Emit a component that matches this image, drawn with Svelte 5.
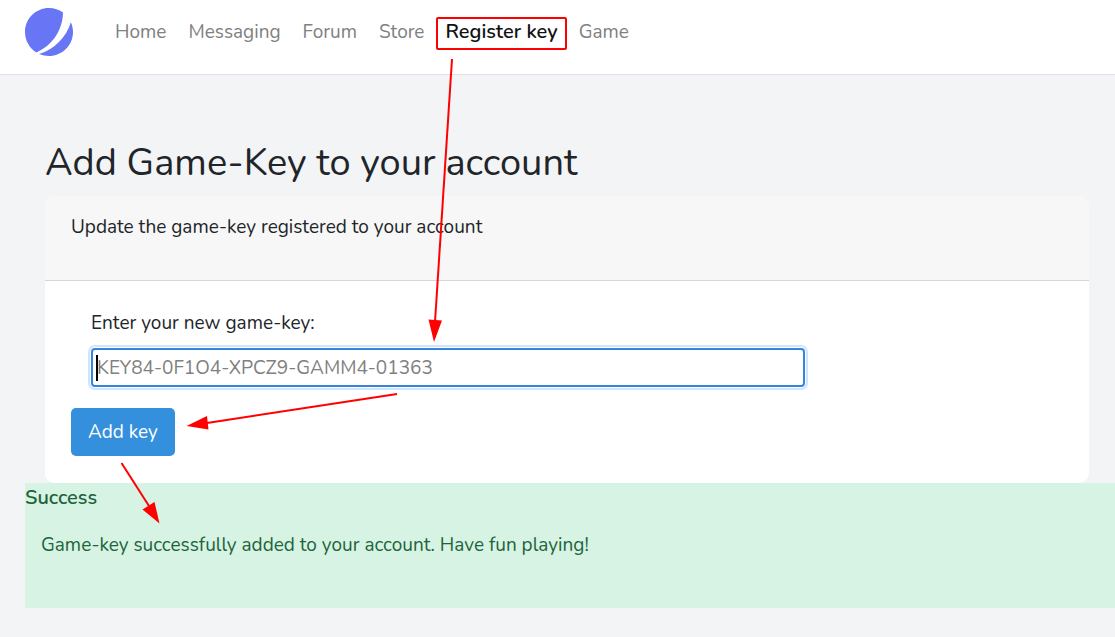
<script>
  const links = ['Home', 'Messaging', 'Forum', 'Store', 'Register key', 'Game'];
  const active = 'Register key';
  let key = $state('');
</script>

<header>
  <a class="logo" href="#home" aria-label="Home page">
    <svg viewBox="0 0 48 48" width="48" height="48" fill="#6875f5" aria-hidden="true">
      <path d="M11.395 44.428C4.557 40.198 0 32.632 0 24 0 10.745 10.745 0 24 0a23.891 23.891 0 0113.997 4.502c-.2 17.907-11.097 33.245-26.602 39.926z" />
      <path d="M14.134 45.885A23.914 23.914 0 0024 48c13.255 0 24-10.745 24-24 0-3.516-.756-6.856-2.115-9.866-4.659 15.143-16.608 27.092-31.75 31.751z" />
    </svg>
  </a>
  <nav>
    {#each links as link}
      <a href="#{link.toLowerCase().replace(' ', '-')}" class:active={link === active} aria-current={link === active ? 'page' : undefined}>{link}</a>
    {/each}
  </nav>
</header>

<main>
  <h1>Add Game-Key to your account</h1>
  <section class="card">
    <div class="card-header">Update the game-key registered to your account</div>
    <form class="card-body" onsubmit={(e) => e.preventDefault()}>
      <div class="field">
        <label for="key">Enter your new game-key:</label>
        <div class="control">
          <input id="key" type="text" placeholder="KEY84-0F1O4-XPCZ9-GAMM4-01363" bind:value={key} />
          <span class="caret"></span>
        </div>
      </div>
      <button type="submit">Add key</button>
    </form>
  </section>
</main>
<section class="alert" role="status">
  <strong>Success</strong>
  <p>Game-key successfully added to your account. Have fun playing!</p>
</section>

<svg class="arrows" width="640" height="540" fill="#f00" stroke="#f00" aria-hidden="true">
  <g stroke-width="2">
    <path d="M452 59 L435 322" />
    <path d="M397 394 L207 423" />
    <path d="M121.500 463 L149 506" />
  </g>
  <g stroke="none">
    <path d="M434 342 L428.500 319.500 L442 320.500 Z" />
    <path d="M186.500 426 L207 416 L208.500 429.500 Z" />
    <path d="M159.500 523.500 L142.500 509.500 L154.500 502 Z" />
  </g>
</svg>

<style>
  :global(body) {
    background: #f2f4f6;
    color: #212529;
    font: 19px/30px Nunito, Lato, sans-serif;
  }
  header {
    display: flex;
    align-items: flex-start;
    gap: 31px;
    padding: 8px 25px 18px;
    background: #fff;
    border-bottom: 1px solid #dee2e6;
  }
  header a {
    text-decoration: none;
  }
  .logo svg {
    display: block;
  }
  nav {
    display: flex;
    padding-top: 9px;
  }
  nav a {
    padding: 0 9px;
    border: 2px solid transparent;
    line-height: 26px;
    color: #808080;
    white-space: nowrap;
  }
  nav a.active {
    margin: 0 1px;
    padding: 0 7px 3px;
    border-color: #f00;
    border-radius: 2px;
    color: #111;
    font-size: 20px;
    font-weight: 600;
  }
  main {
    padding: 64px 26px 0 45px;
  }
  h1 {
    margin: 0 0 9px;
    font-size: 38px;
    font-weight: 400;
    line-height: 48px;
  }
  .card {
    overflow: hidden;
    background: #fff;
    border-radius: 10px;
  }
  .card-header {
    padding: 16px 26px 38px;
    background: #f7f7f7;
    border-bottom: 1px solid #d6d6d6;
  }
  .card-body {
    padding: 27px 26px;
  }
  .field {
    padding: 0 20px;
  }
  label {
    display: block;
  }
  .control {
    position: relative;
    width: 75%;
    margin: 10px 0 21px;
  }
  input {
    display: block;
    box-sizing: border-box;
    width: 100%;
    height: 39px;
    padding: 0 4px;
    border: 2px solid #3783dd;
    border-radius: 4px;
    outline: none;
    box-shadow: 0 0 0 1px #fff, 0 0 0 3px #cce6ff;
    background: #fff;
    color: #212529;
    font: inherit;
  }
  input::placeholder {
    color: #808080;
    opacity: 1;
  }
  .caret {
    position: absolute;
    left: 5px;
    top: 7px;
    width: 2px;
    height: 26px;
    background: #000;
  }
  button {
    display: block;
    padding: 9px 17px;
    border: 0;
    border-radius: 5px;
    background: #3490dc;
    color: #fff;
    font: inherit;
  }
  .alert {
    margin-left: 25px;
    padding-bottom: 48px;
    background: #d7f3e3;
    color: #1d643b;
    line-height: 29px;
  }
  .alert strong {
    display: block;
    font-size: 20px;
    font-weight: 600;
  }
  .alert p {
    margin: 19px 16px 0;
  }
  .arrows {
    position: absolute;
    left: 0;
    top: 0;
    pointer-events: none;
  }
</style>
